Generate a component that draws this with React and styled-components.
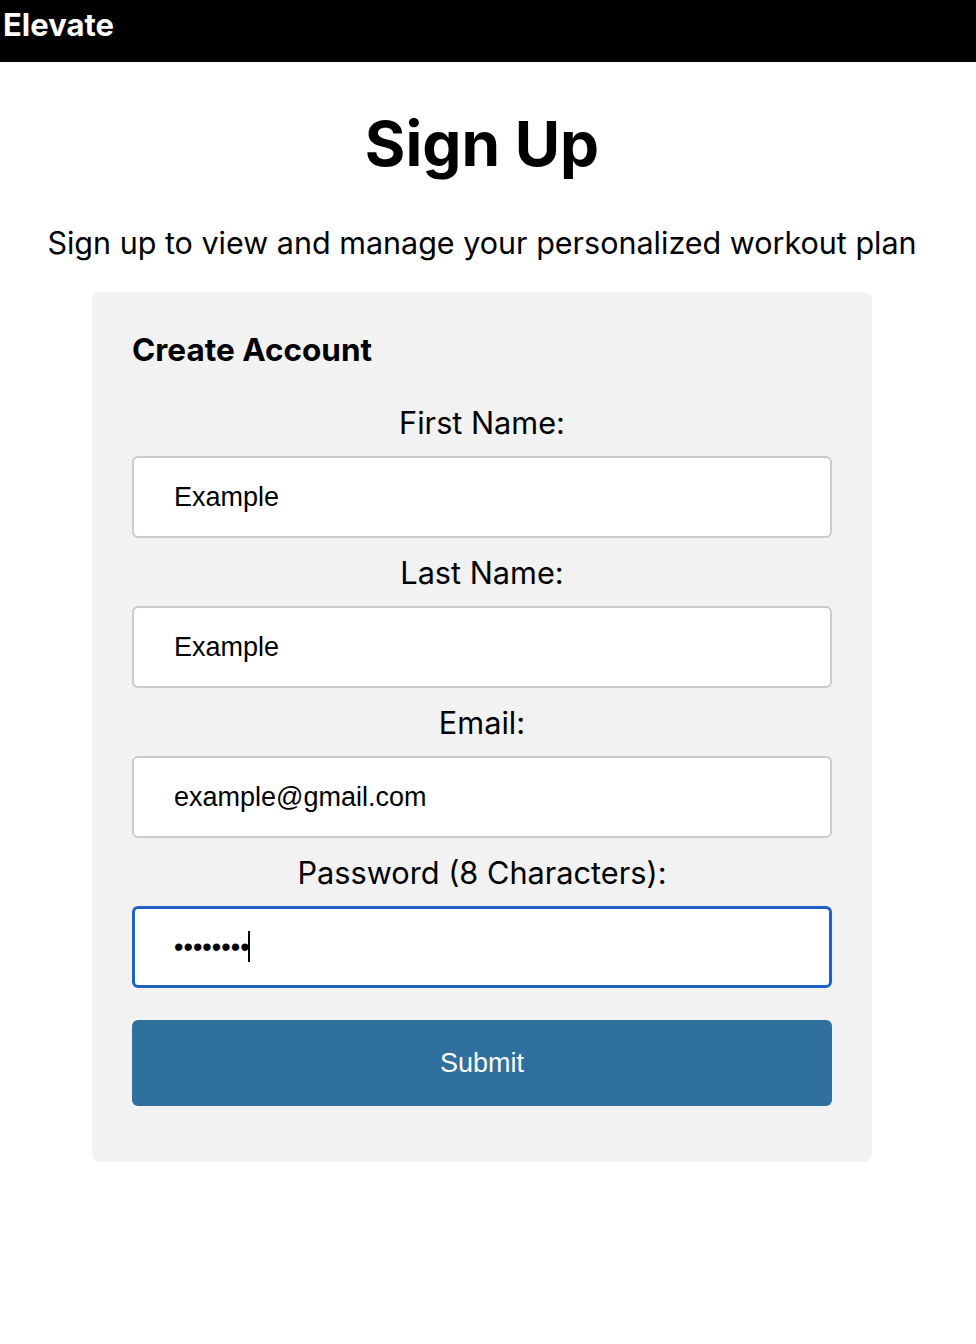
import React from 'react';
import styled, { createGlobalStyle } from 'styled-components';

const GlobalStyle = createGlobalStyle`
    body {
        margin: 0;
        font-family: Inter, "Noto Sans", sans-serif;
        background: #fff;
        color: #000;
    }
`;

const TopBar = styled.header`
    height: 62px;
    background: #000;
    color: #fff;
    padding: 0 3px;
`;
const Brand = styled.span`
    display: block;
    font-size: 31px;
    font-weight: 700;
    line-height: 49px;
`;

const Main = styled.main`
    display: flex;
    flex-direction: column;
    align-items: center;
    padding-right: 12px;
`;
const Title = styled.h1`
    font-size: 62px;
    font-weight: 700;
    margin: 44px 0 0;
    line-height: 76px;
`;
const Subtitle = styled.p`
    font-size: 30.5px;
    line-height: 36px;
    margin: 43px 0 31px;
`;

const Card = styled.form`
    width: 780px;
    box-sizing: border-box;
    background: #f2f2f2;
    border-radius: 8px;
    padding: 40px 40px 56px;
    display: flex;
    flex-direction: column;
`;
const CardTitle = styled.h2`
    font-size: 31.5px;
    font-weight: 700;
    line-height: 36px;
    margin: 0 0 21px;
`;
const Label = styled.label`
    display: block;
    text-align: center;
    font-size: 30.7px;
    line-height: 36px;
    margin: ${props => props.first ? '16px' : '17px'} 0 15px;
`;
const Field = styled.div`
    position: relative;
`;
const Input = styled.input`
    box-sizing: border-box;
    width: 100%;
    height: 82px;
    border: 2px solid #cbcbcb;
    border-radius: 6px;
    background: #fff;
    padding: 0 40px;
    font-family: "Liberation Sans", Arial, sans-serif;
    font-size: 27px;
    color: #000;
    outline: none;
    caret-color: transparent;
    &:focus {
        border: 3px solid #1f62c6;
        padding: 0 39px;
    }
`;
// text caret shown in the focused password box
const Caret = styled.span`
    position: absolute;
    left: 116px;
    top: 25px;
    width: 2px;
    height: 31px;
    background: #000;
`;
const SubmitButton = styled.button`
    margin-top: 32px;
    height: 86px;
    border: none;
    border-radius: 6px;
    background: #30709f;
    color: #fff;
    font-family: "Liberation Sans", Arial, sans-serif;
    font-size: 27px;
    cursor: pointer;
`;

const fields = [
    { id: 'first', label: 'First Name:', type: 'text', value: 'Example' },
    { id: 'last', label: 'Last Name:', type: 'text', value: 'Example' },
    { id: 'email', label: 'Email:', type: 'email', value: 'example@gmail.com' },
    { id: 'password', label: 'Password (8 Characters):', type: 'password', value: '12345678' },
];

const App = () => {
    return (
        <>
            <GlobalStyle />
            <TopBar>
                <Brand>Elevate</Brand>
            </TopBar>
            <Main>
                <Title>Sign Up</Title>
                <Subtitle>Sign up to view and manage your personalized workout plan</Subtitle>
                <Card onSubmit={e => e.preventDefault()}>
                    <CardTitle>Create Account</CardTitle>
                    {fields.map((f, i) => (
                        <React.Fragment key={f.id}>
                            <Label htmlFor={f.id} first={i === 0}>{f.label}</Label>
                            <Field>
                                <Input
                                    id={f.id}
                                    type={f.type}
                                    defaultValue={f.value}
                                    autoFocus={f.type === 'password'}
                                />
                                {f.type === 'password' && <Caret />}
                            </Field>
                        </React.Fragment>
                    ))}
                    <SubmitButton type="submit">Submit</SubmitButton>
                </Card>
            </Main>
        </>
    );
};

export default App;
